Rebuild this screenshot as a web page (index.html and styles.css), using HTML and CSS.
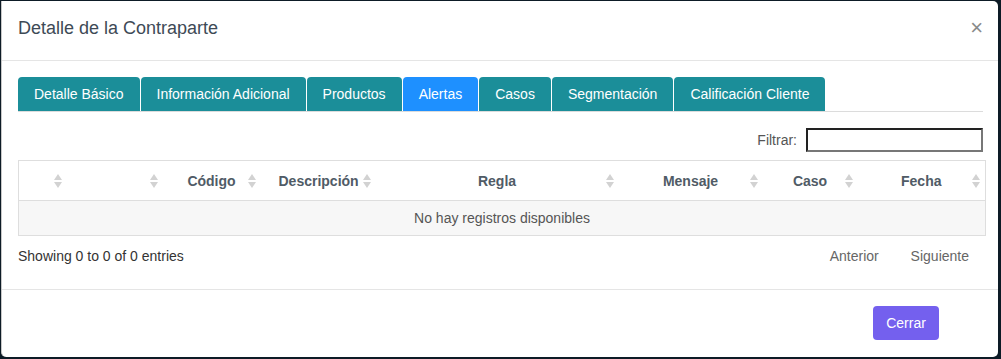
FILE: index.html
```html
<!DOCTYPE html>
<html lang="es">
<head>
    <meta charset="UTF-8">
    <meta name="viewport" content="width=device-width, initial-scale=1.0">
    <title>Detalle de la Contraparte</title>
    <link rel="stylesheet" href="styles.css">
</head>
<body>
    <div class="modal">
        <div class="modal-header">
            <h4 class="modal-title">Detalle de la Contraparte</h4>
            <button class="close" type="button">&times;</button>
        </div>
        <div class="modal-body">
            <ul class="tabs">
                <li><a href="#">Detalle Básico</a></li>
                <li><a href="#">Información Adicional</a></li>
                <li><a href="#">Productos</a></li>
                <li class="active"><a href="#">Alertas</a></li>
                <li><a href="#">Casos</a></li>
                <li><a href="#">Segmentación</a></li>
                <li><a href="#">Calificación Cliente</a></li>
            </ul>
            <div class="filter-row">
                <label for="filter">Filtrar:</label>
                <input type="search" id="filter">
            </div>
            <table class="grid">
                <colgroup>
                    <col style="width: 48px">
                    <col style="width: 96px">
                    <col style="width: 98px">
                    <col style="width: 115px">
                    <col style="width: 243px">
                    <col style="width: 144px">
                    <col style="width: 95px">
                    <col style="width: 128px">
                </colgroup>
                <thead>
                    <tr>
                        <th class="sortable"></th>
                        <th class="sortable"></th>
                        <th class="sortable">Código</th>
                        <th class="sortable">Descripción</th>
                        <th class="sortable">Regla</th>
                        <th class="sortable">Mensaje</th>
                        <th class="sortable">Caso</th>
                        <th class="sortable">Fecha</th>
                    </tr>
                </thead>
                <tbody>
                    <tr>
                        <td colspan="8" class="empty">No hay registros disponibles</td>
                    </tr>
                </tbody>
            </table>
            <div class="table-info">
                <span>Showing 0 to 0 of 0 entries</span>
                <div class="pager">
                    <a href="#">Anterior</a>
                    <a href="#">Siguiente</a>
                </div>
            </div>
        </div>
        <div class="modal-footer">
            <button class="btn-close" type="button">Cerrar</button>
        </div>
    </div>
</body>
</html>
```

FILE: styles.css
```css
* {
    box-sizing: border-box;
}
body {
    margin: 0;
    height: 359px;
    overflow: hidden;
    background-color: #0d1b26;
    font-family: "Liberation Sans", Arial, sans-serif;
    font-size: 14px;
    color: #333;
}
.modal {
    margin: 1px 0 0 1px;
    width: 997px;
    height: 356px;
    background: #fff;
    border-left: 1px solid #c8c8c8;
    border-radius: 0 5px 5px 5px;
    display: flex;
    flex-direction: column;
}
.modal-header {
    display: flex;
    justify-content: space-between;
    align-items: center;
    padding: 13px 15px 18px 16px;
    border-bottom: 1px solid #e5e5e5;
}
.modal-title {
    margin: 0;
    font-size: 18px;
    font-weight: normal;
    line-height: 28px;
    color: #3e4a56;
}
.close {
    border: none;
    background: none;
    padding: 0;
    font-family: "Liberation Sans", Arial, sans-serif;
    font-size: 22px;
    line-height: 1;
    color: #8a8a8a;
    cursor: pointer;
}
.modal-body {
    flex: 1;
    padding: 16px 11px 0 16px;
}
.tabs {
    list-style: none;
    margin: 0 4px 0 0;
    padding: 0;
    display: flex;
    border-bottom: 1px solid #dcdcdc;
}
.tabs li {
    margin-right: 1px;
}
.tabs a {
    display: block;
    padding: 0 16px;
    height: 34px;
    line-height: 34px;
    background-color: #1b8e99;
    color: #fff;
    text-decoration: none;
    border-radius: 4px 4px 0 0;
}
.tabs .active a {
    background-color: #1e90ff;
}
.filter-row {
    display: flex;
    justify-content: flex-end;
    align-items: center;
    margin: 16px 4px 8px 0;
    color: #555;
}
.filter-row label {
    margin-right: 9px;
}
.filter-row input {
    width: 177px;
    height: 24px;
    padding: 0 4px;
    border: 2px solid;
    border-color: #222 #777 #777 #222;
    font-family: inherit;
    font-size: 14px;
}
.grid {
    width: 967px;
    border-collapse: collapse;
    table-layout: fixed;
    border: 1px solid #dedede;
}
.grid th {
    position: relative;
    height: 40px;
    padding: 0 18px;
    text-align: center;
    font-weight: bold;
    color: #505b66;
    border-bottom: 1px solid #dedede;
    white-space: nowrap;
}
.sortable::before,
.sortable::after {
    content: "";
    position: absolute;
    right: 5px;
    border-left: 4px solid transparent;
    border-right: 4px solid transparent;
}
.sortable::before {
    top: 13px;
    border-bottom: 6px solid #d2d2d2;
}
.sortable::after {
    top: 21px;
    border-top: 6px solid #d2d2d2;
}
.grid .empty {
    height: 35px;
    padding: 0 8px;
    text-align: center;
    background-color: #f7f7f7;
    color: #555;
}
.table-info {
    display: flex;
    justify-content: space-between;
    align-items: center;
    width: 967px;
    margin-top: 10px;
    line-height: 20px;
    color: #333;
}
.pager a {
    padding: 0 16px;
    color: #666;
    text-decoration: none;
}
.pager a + a {
    margin-left: -4px;
}
.modal-footer {
    display: flex;
    justify-content: flex-end;
    padding: 16px 59px 17px 16px;
    border-top: 1px solid #e5e5e5;
}
.btn-close {
    width: 66px;
    height: 34px;
    border: none;
    border-radius: 4px;
    background-color: #7460ee;
    color: #fff;
    font-family: inherit;
    font-size: 14px;
    cursor: pointer;
}
```
